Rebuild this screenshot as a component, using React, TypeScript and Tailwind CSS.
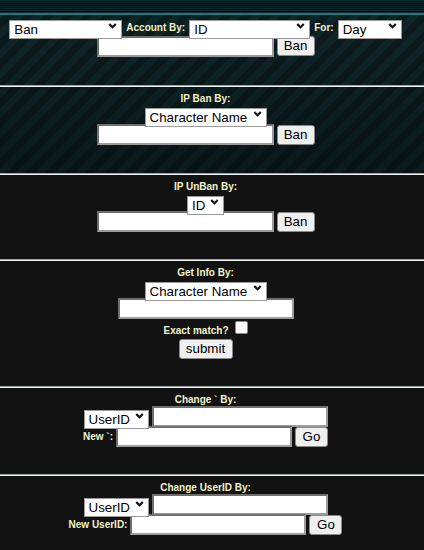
import type { ReactNode } from "react";

const font = "font-['Liberation_Sans',Arial,sans-serif]";

function Label({ children, className = "" }: { children: ReactNode; className?: string }) {
  return (
    <span className={`text-[10px] leading-[12px] font-bold text-[#f2f2cc] whitespace-pre ${className}`}>
      {children}
    </span>
  );
}

function Select({ value, width }: { value: string; width: string }) {
  return (
    <div className={`relative h-[19px] ${width}`}>
      <select
        defaultValue={value}
        className="appearance-none w-full h-full bg-white border border-[#9a9a9a] pl-[4px] pr-[18px] text-[13.33px] leading-[17px] text-black outline-none"
      >
        <option>{value}</option>
      </select>
      <svg
        viewBox="0 0 10 7"
        className="absolute right-[5px] top-[6px] w-[9px] h-[6px] pointer-events-none"
        aria-hidden="true"
      >
        <polyline points="1.2,1.2 5,5 8.8,1.2" fill="none" stroke="#111" strokeWidth="2.6" />
      </svg>
    </div>
  );
}

function Input({ width = "w-[177px]" }: { width?: string }) {
  return (
    <input
      type="text"
      className={`${width} h-[21px] bg-white border-2 border-t-[#6f6f6f] border-l-[#6f6f6f] border-b-[#9c9c9c] border-r-[#9c9c9c] outline-none`}
    />
  );
}

function Button({ children, width }: { children: ReactNode; width: string }) {
  return (
    <button
      type="button"
      className={`${width} h-[20px] bg-[#efefef] border border-[#8a8a8a] rounded-[3px] text-[13.33px] leading-[18px] text-black`}
    >
      {children}
    </button>
  );
}

function Rule() {
  return <div className="h-[2px] w-full border-t border-t-[#9aa3a3] border-b border-b-[#eef2f2]" />;
}

function Row({ children, className = "" }: { children: ReactNode; className?: string }) {
  return <div className={`w-[411px] flex items-center justify-center ${className}`}>{children}</div>;
}

export default function App() {
  return (
    <div className={`w-[424px] min-h-[550px] bg-[#121212] ${font}`}>
      <div className="bg-[linear-gradient(180deg,rgba(0,0,0,0)_0%,rgba(0,0,0,0.35)_100%),repeating-linear-gradient(135deg,#0c1c1e_0px,#0c1c1e_7px,#10272a_7px,#10272a_14px)]">
        <div className="h-[13px] bg-[repeating-linear-gradient(180deg,#0c2a2d_0px,#0c2a2d_1px,#030a0b_1px,#030a0b_2px)]" />
        <div className="h-[2px] bg-[#2d7479]" />

        <div className="pt-[2px] pb-[29px] flex flex-col">
          <Row className="gap-[4px] h-[19px]">
            <Select value="Ban" width="w-[113px]" />
            <Label className="translate-y-[1px]">Account By:</Label>
            <Select value="ID" width="w-[121px]" />
            <Label className="translate-y-[1px]">For:</Label>
            <Select value="Day" width="w-[64px]" />
          </Row>
          <Row className="gap-[3px] h-[20px]">
            <Input />
            <Button width="w-[38px]">Ban</Button>
          </Row>
        </div>
        <Rule />

        <div className="pt-[6px] pb-[28px] flex flex-col">
          <Row className="h-[12px]">
            <Label>IP Ban By:</Label>
          </Row>
          <Row className="h-[19px]">
            <Select value="Character Name" width="w-[122px]" />
          </Row>
          <Row className="gap-[3px] h-[21px]">
            <Input />
            <Button width="w-[38px]">Ban</Button>
          </Row>
        </div>
      </div>
      <Rule />

      <div className="pt-[6px] pb-[27px] flex flex-col">
        <Row className="h-[12px]">
          <Label>IP UnBan By:</Label>
        </Row>
        <Row className="h-[18px]">
          <Select value="ID" width="w-[37px]" />
        </Row>
        <Row className="gap-[3px] h-[21px]">
          <Input />
          <Button width="w-[38px]">Ban</Button>
        </Row>
      </div>
      <Rule />

      <div className="pt-[6px] pb-[27px] flex flex-col">
        <Row className="h-[12px]">
          <Label>Get Info By:</Label>
        </Row>
        <Row className="h-[19px]">
          <Select value="Character Name" width="w-[122px]" />
        </Row>
        <Row className="h-[21px]">
          <Input width="w-[176px]" />
        </Row>
        <Row className="h-[19px] gap-[6px]">
          <Label className="translate-y-[2px]">Exact match?</Label>
          <input
            type="checkbox"
            className="appearance-none w-[13px] h-[13px] bg-white border border-[#8a8a8a] rounded-[2px] -mt-[2px]"
          />
        </Row>
        <Row className="h-[21px]">
          <Button width="w-[54px]">submit</Button>
        </Row>
      </div>
      <Rule />

      <div className="pt-[6px] pb-[27px] flex flex-col">
        <Row className="h-[12px]">
          <Label>Change ` By:</Label>
        </Row>
        <Row className="gap-[3px] h-[20px]">
          <Select value="UserID" width="w-[65px]" />
          <Input width="w-[176px]" />
        </Row>
        <Row className="gap-[3px] h-[21px]">
          <Label>New `:</Label>
          <Input width="w-[176px]" />
          <Button width="w-[33px]">Go</Button>
        </Row>
      </div>
      <Rule />

      <div className="pt-[6px] pb-[27px] flex flex-col">
        <Row className="h-[12px]">
          <Label>Change UserID By:</Label>
        </Row>
        <Row className="gap-[3px] h-[20px]">
          <Select value="UserID" width="w-[65px]" />
          <Input width="w-[176px]" />
        </Row>
        <Row className="gap-[3px] h-[21px]">
          <Label>New UserID:</Label>
          <Input width="w-[176px]" />
          <Button width="w-[33px]">Go</Button>
        </Row>
      </div>
    </div>
  );
}
